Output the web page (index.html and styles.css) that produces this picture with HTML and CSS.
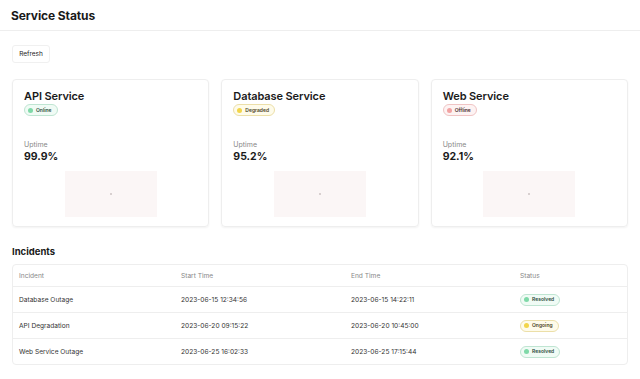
FILE: index.html
```html
<!DOCTYPE html>
<html lang="en">
  <head>
    <meta charset="UTF-8" />
    <meta name="viewport" content="width=device-width, initial-scale=1.0" />
    <title>Service Status</title>
    <link rel="stylesheet" href="styles.css">
  </head>
  <body>
    <header class="top-bar">
      <h1>Service Status</h1>
    </header>

    <main class="content">
      <button class="refresh-btn">Refresh</button>

      <div class="card-grid">
        <div class="service-card">
          <h2>API Service</h2>
          <span class="badge badge-green"><i class="dot"></i>Online</span>
          <div class="uptime-label">Uptime</div>
          <div class="uptime-value">99.9%</div>
          <div class="chart"><i class="chart-dot"></i></div>
        </div>
        <div class="service-card">
          <h2>Database Service</h2>
          <span class="badge badge-yellow"><i class="dot"></i>Degraded</span>
          <div class="uptime-label">Uptime</div>
          <div class="uptime-value">95.2%</div>
          <div class="chart"><i class="chart-dot"></i></div>
        </div>
        <div class="service-card">
          <h2>Web Service</h2>
          <span class="badge badge-red"><i class="dot"></i>Offline</span>
          <div class="uptime-label">Uptime</div>
          <div class="uptime-value">92.1%</div>
          <div class="chart"><i class="chart-dot"></i></div>
        </div>
      </div>

      <h3 class="section-title">Incidents</h3>
      <div class="table-wrap">
        <table class="incidents">
          <thead>
            <tr>
              <th class="col-name">Incident</th>
              <th class="col-start">Start Time</th>
              <th class="col-end">End Time</th>
              <th>Status</th>
            </tr>
          </thead>
          <tbody>
            <tr>
              <td>Database Outage</td>
              <td>2023-06-15 12:34:56</td>
              <td>2023-06-15 14:22:11</td>
              <td><span class="badge badge-green"><i class="dot"></i>Resolved</span></td>
            </tr>
            <tr>
              <td>API Degradation</td>
              <td>2023-06-20 09:15:22</td>
              <td>2023-06-20 10:45:00</td>
              <td><span class="badge badge-yellow"><i class="dot"></i>Ongoing</span></td>
            </tr>
            <tr>
              <td>Web Service Outage</td>
              <td>2023-06-25 16:02:33</td>
              <td>2023-06-25 17:15:44</td>
              <td><span class="badge badge-green"><i class="dot"></i>Resolved</span></td>
            </tr>
          </tbody>
        </table>
      </div>
    </main>
  </body>
</html>
```

FILE: styles.css
```css
body {
  margin: 0;
  font-family: Inter, "Noto Sans", sans-serif;
  color: #1a1a1a;
  background-color: #fff;
}

.top-bar {
  height: 30px;
  padding: 0 11px;
  border-bottom: 1px solid #eee;
  display: flex;
  align-items: center;
}

.top-bar h1 {
  margin: 0;
  font-size: 12px;
  font-weight: 700;
  letter-spacing: -0.1px;
}

.content {
  padding: 14px 12px;
}

.refresh-btn {
  display: block;
  width: 38px;
  height: 18px;
  padding: 0;
  font-family: inherit;
  font-size: 6.5px;
  color: #222;
  background: #fff;
  border: 1px solid #f0f0f0;
  border-radius: 3px;
}

.card-grid {
  display: grid;
  grid-template-columns: repeat(3, 1fr);
  gap: 12px;
  margin-top: 16px;
}

.service-card {
  height: 148px;
  box-sizing: border-box;
  padding: 8px 11px;
  border: 1px solid #eee;
  border-radius: 4px;
  box-shadow: 0 1px 2px rgba(0, 0, 0, 0.05);
  display: flex;
  flex-direction: column;
  align-items: flex-start;
}

.service-card h2 {
  margin: 0;
  font-size: 11px;
  font-weight: 600;
  line-height: 16px;
  letter-spacing: -0.1px;
}

.badge {
  display: inline-flex;
  align-items: center;
  gap: 3px;
  height: 10px;
  padding: 0 5px 0 3px;
  font-size: 5px;
  font-weight: 600;
  border-radius: 6px;
  border: 1px solid;
  line-height: 1;
}

.badge .dot {
  width: 5px;
  height: 5px;
  border-radius: 50%;
}

.badge-green {
  background: #f0fbf5;
  border-color: #bfe5d2;
  color: #2a4a3a;
}

.badge-green .dot {
  background: #7fd9a8;
}

.badge-yellow {
  background: #fefbea;
  border-color: #ecdfa8;
  color: #4a4220;
}

.badge-yellow .dot {
  background: #f2d54a;
}

.badge-red {
  background: #fdf3f3;
  border-color: #f0c4c4;
  color: #4a2a2a;
}

.badge-red .dot {
  background: #f2a2a2;
}

.uptime-label {
  margin-top: 24px;
  font-size: 7px;
  line-height: 9px;
  color: #888;
}

.uptime-value {
  margin-top: 1px;
  font-size: 10.5px;
  line-height: 13px;
  font-weight: 700;
}

.chart {
  align-self: center;
  width: 92px;
  height: 46px;
  margin-top: 8px;
  background: #fbf6f6;
  display: flex;
  align-items: center;
  justify-content: center;
}

.chart-dot {
  width: 2px;
  height: 2px;
  background: #d8d0d0;
}

.section-title {
  margin: 19px 0 7px;
  font-size: 9.5px;
  font-weight: 700;
}

.table-wrap {
  border: 1px solid #eee;
  border-radius: 4px;
  overflow: hidden;
}

.incidents {
  width: 100%;
  border-collapse: collapse;
  font-size: 6.6px;
}

.incidents th {
  text-align: left;
  font-weight: 400;
  color: #888;
  height: 21px;
  padding: 0 6px;
}

.incidents td {
  height: 25px;
  padding: 0 6px;
  color: #333;
  border-top: 1px solid #eee;
}

.col-name {
  width: 150px;
}

.col-start {
  width: 158px;
}

.col-end {
  width: 157px;
}
```
